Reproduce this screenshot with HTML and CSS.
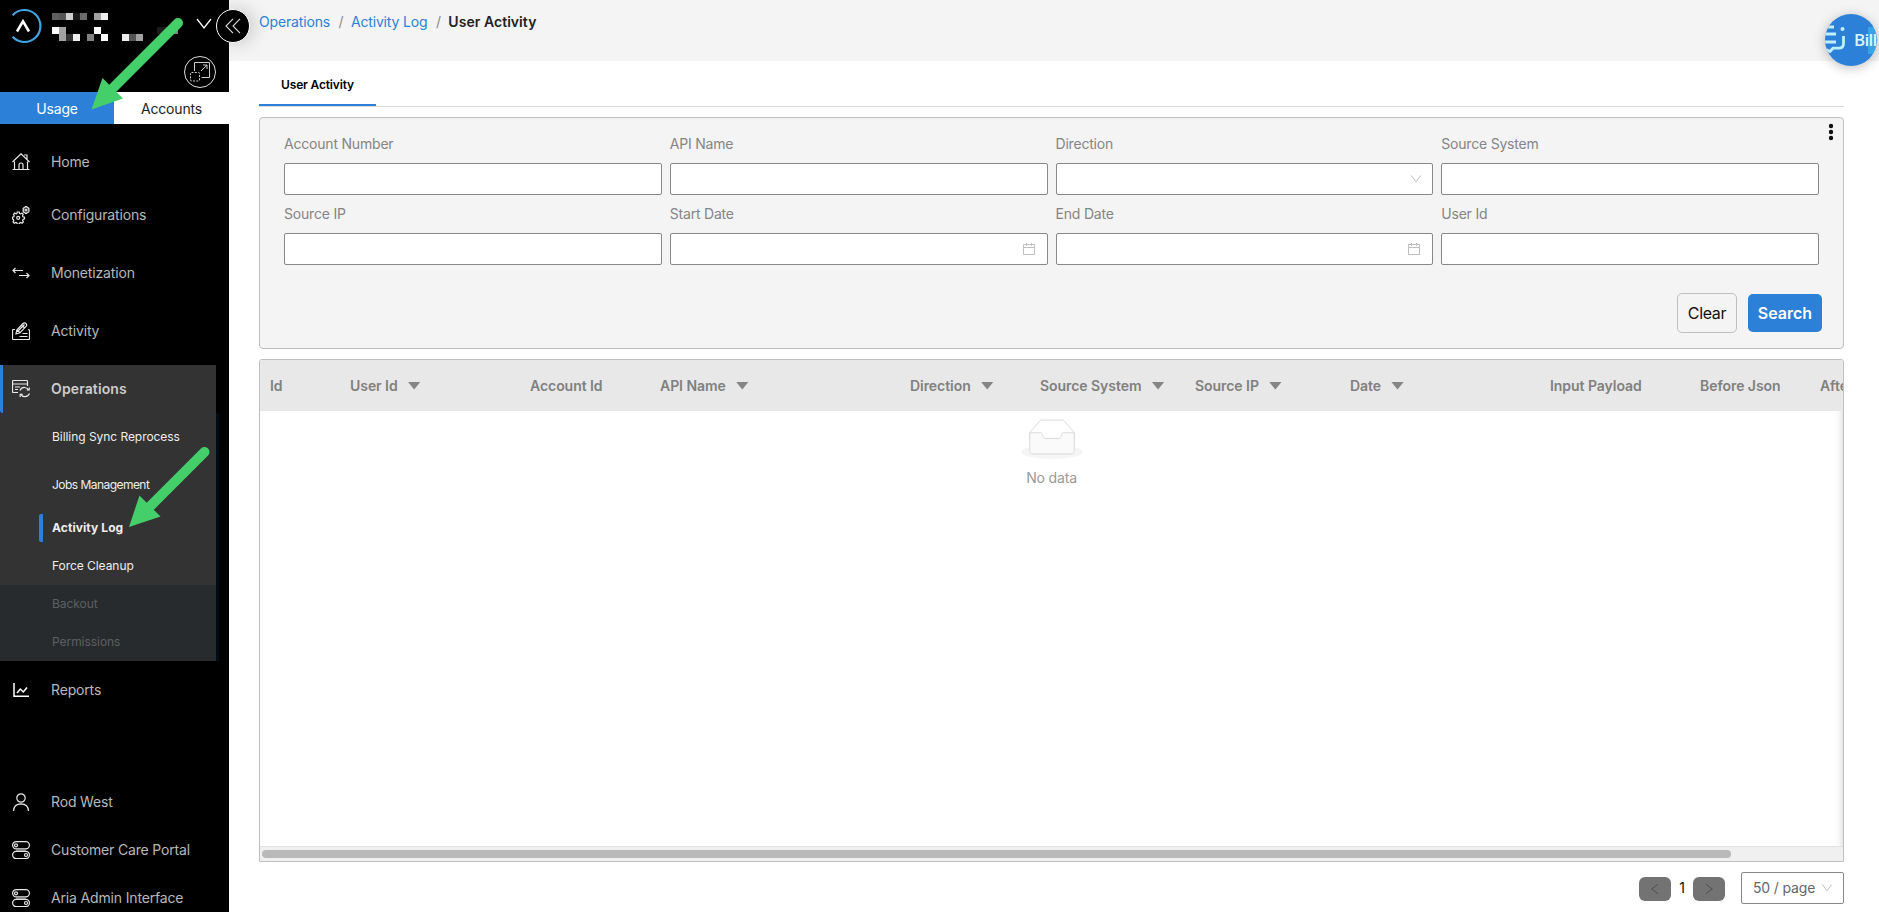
FILE: index.html
```html
<!DOCTYPE html>
<html lang="en">
<head>
<meta charset="utf-8">
<title>User Activity</title>
<link rel="stylesheet" href="styles.css">
</head>
<body>
<div class="app">
  <aside class="sidebar">
    <div class="brand">
      <svg class="brand-art" width="229" height="92" viewBox="0 0 229 92" fill="none">
        <path d="M12.6 15.2A16 16 0 1 1 12.6 36.8" stroke="#3fa6e4" stroke-width="2.2"/>
        <path d="M17 31.5l6-10.2 6 10.2" stroke="#fff" stroke-width="2.5"/>
        <g shape-rendering="crispEdges">
          <path fill="#5f5f5f" d="M52 13h7v7h-7z"/><path fill="#565656" d="M59 13h7v7h-7zM129 34h7v7h-7z"/><path fill="#d0d0d0" d="M66 13h7v7h-7z"/><path fill="#1b1b1b" d="M73 13h7v7h-7zM157 27h14v7h-14z"/><path fill="#6b6b6b" d="M80 13h7v7h-7z"/><path fill="#a2a2a2" d="M94 13h7v7h-7zM59 27h7v14h-7zM136 34h7v7h-7z"/><path fill="#eee" d="M101 13h7v7h-7zM73 34h7v7h-7zM122 34h7v7h-7z"/>
          <path fill="#fff" d="M52 27h7v7h-7zM94 27h7v7h-7zM101 34h7v7h-7z"/><path fill="#333" d="M66 34h7v7h-7z"/><path fill="#808080" d="M87 34h7v7h-7zM171 27h7v7h-7z"/>
        </g>
        <path d="M197 19l7 9 7-9" stroke="#fff" stroke-width="1.3"/>
        <circle cx="200" cy="72" r="15.5" stroke="#ddd"/>
        <path d="M194.500 71V62.500h15v15h-8M201 71l6-6M203 65h4v4" stroke="#ccc"/>
        <rect x="190.500" y="72.500" width="9" height="8.500" rx="1" stroke="#ccc" stroke-dasharray="2 1.300"/>
      </svg>
    </div>
    <div class="switch"><span class="switch-on">Usage</span><span class="switch-off">Accounts</span></div>
    <nav class="menu">
      <a class="item item-home"><svg class="icon" viewBox="0 0 18 18"><path d="M.5 9L9 .8 17.500 9M2.500 8.500v8M15.500 8.500v8M.5 16.500h17M7 16v-4.500q0-1.500 2-1.500t2 1.500V16M12 2h3v4"/></svg>Home</a>
      <a class="item"><svg class="icon" viewBox="0 0 18 18"><circle cx="6.200" cy="11.800" r="1.500"/><path d="M5.200 6h2l.4 1.500 1 .4L10 7.100l1.200 1.200-.7 1.500.4.9 1.600.5v1.700l-1.500.6-.4 1 .8 1.400-1.300 1.300-1.400-.7-1 .4-.5 1.300H5.300l-.5-1.400-1-.4-1.500.8L1 15.900l.8-1.400-.4-1L.5 13v-1.800l1.300-.5.4-1-.7-1.400L2.700 7l1.500.8.7-.3z"/><circle cx="14" cy="4" r="1"/><path d="M13.300.7h1.500l.4 1 1.200.2.7 1.200-.5.9.5 1-.7 1.200-1.200.1-.5 1h-1.400l-.5-1-1.200-.2-.6-1.200.6-.9-.6-1 .7-1.200 1.100-.1z"/></svg>Configurations</a>
      <a class="item"><svg class="icon" viewBox="0 0 18 18"><path d="M11 6.500H1M3.500 4L1 6.500 3.500 9M7 11.500h10M14.500 9l2.500 2.500-2.500 2.500"/></svg>Monetization</a>
      <a class="item"><svg class="icon" viewBox="0 0 18 18"><path d="M3 7.500H1.500q-1 0-1 1v8q0 1 1 1h15q1 0 1-1v-8q0-1-1.500-1M7.500 14.500h8M10.500 11.500h5M4 12l.8-4L11 1.500q1.300-1.300 2.700-.2 1.600 1.300.5 2.900L8 10.800zM5 8l3 2.700M6.500 8.500l6-6M9.500 3l3.200 3"/></svg>Activity</a>
      <section class="group">
        <a class="item item-current"><svg class="icon" viewBox="0 0 18 18"><path d="M6 12.500H1.500q-1 0-1-1v-10q0-1 1-1h13q1 0 1 1V6M.5 4h15M3 7h5M3 9.500h3M8 10.500q1.500-3.500 5-3 2.500.3 3.500 2.500M17.200 7.500V10h-2.500M17.500 13.500q-1.500 3.500-4.800 3.200-2.700-.2-3.900-2.500M8.200 17v-2.700h2.500"/></svg>Operations</a>
        <div class="sub">
          <a class="sub-item tall">Billing Sync Reprocess</a>
          <a class="sub-item tall narrow">Jobs Management</a>
          <a class="sub-item active"><span>Activity Log</span></a>
          <a class="sub-item">Force Cleanup</a>
          <a class="sub-item disabled">Backout</a>
          <a class="sub-item disabled">Permissions</a>
        </div>
      </section>
      <a class="item item-reports"><svg class="icon bold" viewBox="0 0 18 18"><path d="M2 2v13.300h15M5 12l3.300-4 3 3L15 6.500"/></svg>Reports</a>
      <div class="menu-bottom">
        <a class="item"><svg class="icon" viewBox="0 0 18 18"><circle cx="9" cy="5" r="4.200"/><path d="M1.500 18q.3-7 7.500-7.200Q16.200 11 16.500 18"/></svg>Rod West</a>
        <a class="item"><svg class="icon" viewBox="0 0 18 18"><rect x=".6" y=".6" width="16.800" height="7.300" rx="3.600"/><rect x=".6" y="10.300" width="16.800" height="7.300" rx="3.600"/><circle cx="4" cy="4.300" r="1.500"/><circle cx="14" cy="14" r="1.500"/><path d="M4 9.100h10" stroke="#888" stroke-width="2"/></svg>Customer Care Portal</a>
        <a class="item"><svg class="icon" viewBox="0 0 18 18"><rect x=".6" y=".6" width="16.800" height="7.300" rx="3.600"/><rect x=".6" y="10.300" width="16.800" height="7.300" rx="3.600"/><circle cx="4" cy="4.300" r="1.500"/><circle cx="14" cy="14" r="1.500"/><path d="M4 9.100h10" stroke="#888" stroke-width="2"/></svg>Aria Admin Interface</a>
      </div>
    </nav>
  </aside>

  <main class="main">
    <header class="topbar">
      <a class="crumb">Operations</a><span class="sep">/</span><a class="crumb">Activity Log</a><span class="sep">/</span><b class="crumb-now">User Activity</b>
    </header>
    <div class="content">
      <div class="tabs"><div class="tab">User Activity</div></div>
      <form class="filters">
        <div class="fields">
          <div class="field"><label>Account Number</label><div class="box"></div></div>
          <div class="field"><label>API Name</label><div class="box"></div></div>
          <div class="field"><label>Direction</label><div class="box"><svg class="chev" width="12" height="12" viewBox="0 0 12 12"><path d="M1.300 2.500L6 8.800l4.700-6.300"/></svg></div></div>
          <div class="field"><label>Source System</label><div class="box"></div></div>
          <div class="field"><label>Source IP</label><div class="box"></div></div>
          <div class="field"><label>Start Date</label><div class="box"><svg class="cal" width="14" height="14" viewBox="0 0 14 14"><path d="M1.500 2.500h11v10h-11zM1.500 5.500h11M4.500 1v3M9.500 1v3"/></svg></div></div>
          <div class="field"><label>End Date</label><div class="box"><svg class="cal" width="14" height="14" viewBox="0 0 14 14"><path d="M1.500 2.500h11v10h-11zM1.500 5.500h11M4.500 1v3M9.500 1v3"/></svg></div></div>
          <div class="field"><label>User Id</label><div class="box"></div></div>
        </div>
        <div class="actions"><span class="btn clear">Clear</span><span class="btn search">Search</span></div>
        <svg class="more" width="6" height="18" viewBox="0 0 6 18"><circle cx="3" cy="3" r="2.200"/><circle cx="3" cy="9" r="2.200"/><circle cx="3" cy="15" r="2.200"/></svg>
      </form>
      <section class="table">
        <div class="thead">
          <div>Id</div><div>User Id<i class="sort"></i></div><div>Account Id</div><div>API Name<i class="sort"></i></div><div>Direction<i class="sort"></i></div><div>Source System<i class="sort"></i></div><div>Source IP<i class="sort"></i></div><div>Date<i class="sort"></i></div><div>Input Payload</div><div>Before Json</div><div>After Json</div>
        </div>
        <div class="empty">
          <svg width="62" height="40" viewBox="0 0 64 41"><g transform="translate(0 1)"><ellipse fill="#f5f5f5" cx="32" cy="33" rx="32" ry="7"/><g stroke="#d9d9d9"><path fill="#fff" d="M55 12.760L44.854 1.258C44.367.474 43.656 0 42.907 0H21.093c-.749 0-1.460.474-1.947 1.257L9 12.761V22h46v-9.240z"/><path fill="#fafafa" d="M41.613 15.931c0-1.605.994-2.930 2.227-2.931H55v18.137C55 33.260 53.680 35 52.050 35h-40.100C10.320 35 9 33.259 9 31.137V13h11.160c1.233 0 2.227 1.323 2.227 2.928v.022c0 1.605 1.005 2.901 2.237 2.901h14.752c1.232 0 2.237-1.308 2.237-2.913v-.007z"/></g></g></svg>
          <p>No data</p>
        </div>
        <div class="scroll"><div class="thumb"></div></div>
      </section>
      <footer class="pager">
        <span class="pg"><svg width="12" height="12" viewBox="0 0 12 12"><path d="M9 1.300L2.700 6 9 10.700"/></svg></span>
        <span class="pg-num">1</span>
        <span class="pg"><svg width="12" height="12" viewBox="0 0 12 12"><path d="M3 1.300L9.300 6 3 10.700"/></svg></span>
        <span class="size">50 / page<svg class="chev" width="12" height="12" viewBox="0 0 12 12"><path d="M1.300 2.500L6 8.800l4.700-6.300"/></svg></span>
      </footer>
    </div>
  </main>

  <div class="collapse"><svg width="16" height="16" viewBox="0 0 16 16"><path d="M8 .8L1 8l7 7.200M15 .8L8 8l7 7.200"/></svg></div>
  <div class="chat">
    <svg width="20" height="30" viewBox="0 0 20 30"><path d="M3 2h6M0 9h11M0 17h11M0 24l5 2.500 3-3.300h6q4.500 0 4.500-5V11"/><circle cx="17.500" cy="4" r="2" class="chat-dot"/></svg>
    <span>Bill</span>
  </div>
  <svg class="pointers" width="229" height="560" viewBox="0 0 229 560">
    <path class="shaft" d="M178 23L108 93M204.500 452L146 510.500"/>
    <path class="head" d="M91.500 109.500L102.500 78 123 98.500zM129 527l10.500-31.500 21 21z"/>
  </svg>
</div>
</body>
</html>
```
FILE: styles.css
```css
* { box-sizing: border-box; }
body { margin: 0; font: 14px/20px Inter, "Liberation Sans", sans-serif; letter-spacing: -.16px; background: #fff; }
.app { position: relative; display: flex; width: 1879px; height: 912px; overflow: hidden; }

/* Sidebar */
.sidebar { width: 229px; flex: none; background: #000; display: flex; flex-direction: column; }
.brand { height: 92px; }
.brand-art { display: block; }
.switch { display: flex; height: 32px; line-height: 34px; text-align: center; }
.switch-on { width: 114px; background: #2c80d8; color: #fff; }
.switch-off { flex: 1; background: #fff; color: #222; }
.menu { display: flex; flex-direction: column; padding-top: 14px; }
.item { display: flex; align-items: center; height: 48px; margin-bottom: 10px; padding-left: 12px; gap: 21px; color: #b8b8b8; flex: none; }
.item-home { margin-bottom: 5px; }
.icon { width: 18px; height: 18px; flex: none; fill: none; stroke: #e8e8e8; stroke-width: 1.200; }
.icon.bold { stroke: #fff; stroke-width: 1.500; }
.group { width: 219px; background: #000c17; }
.item-current { width: 216px; margin: 0; padding-left: 9px; border-left: 3px solid #2c80d8; border-radius: 0 0 0 2px; background: #333; color: #ccc; font-weight: 600; letter-spacing: .12px; box-shadow: 3px 0 #000; }
.sub { width: 216px; background: #333; font-size: 12px; letter-spacing: -.05px; }
.sub-item { display: flex; align-items: center; height: 38px; padding-left: 52px; color: #eee; }
.sub-item.tall { height: 48px; }
.sub-item.narrow { letter-spacing: -.54px; }
.sub-item.active { padding-left: 39px; font-weight: 700; letter-spacing: .08px; }
.active span { border-left: 4px solid #2c80d8; border-radius: 2px; padding-left: 9px; line-height: 28px; }
.sub-item.disabled { background: #282b2e; color: #5d5f61; }
.item-reports { margin: 5px 0 0; }
.menu-bottom { padding-top: 64px; }
.menu-bottom .item { margin: 0; }

/* Header */
.main { flex: 1; min-width: 0; }
.topbar { height: 61px; background: #f4f4f4; padding: 12px 30px; display: flex; color: #888; }
.crumb { color: #2c80d8; }
.sep { margin: 0 7.500px 0 8.500px; }
.crumb-now { font-weight: 600; color: #222; letter-spacing: .05px; }
.content { margin: 0 35px 0 30px; }
.tabs { height: 46px; border-bottom: 1px solid #d9d9d9; font-size: 12px; font-weight: 600; color: #000; }
.tab { width: 117px; height: 45px; border-bottom: 2px solid #2c80d8; padding-top: 14px; text-align: center; }

/* Filter form */
.filters { position: relative; height: 232px; margin-top: 10px; padding: 16px 24px; border: 1px solid #bfbfbf; border-radius: 4px; background: #f4f4f4; }
.fields { display: grid; grid-template-columns: repeat(4, 1fr); column-gap: 8px; row-gap: 8px; }
.field label { display: block; height: 29px; color: #858585; line-height: 19px; letter-spacing: -.2px; }
.box { height: 32px; display: flex; align-items: center; justify-content: flex-end; padding-right: 11px; border: 1px solid #888; border-radius: 2px; background: #fff; }
.field { height: 62px; }
.chev, .cal { fill: none; stroke: #bfbfbf; stroke-width: 1; }
.box .chev { margin-right: -1px; }
.actions { display: flex; justify-content: flex-end; align-items: center; gap: 11px; margin: 27px -3px 0 0; }
.btn { display: flex; align-items: center; justify-content: center; border-radius: 5px; font-size: 16px; }
.clear { width: 60px; height: 40px; border: 1px solid #bfbfbf; color: #111; letter-spacing: -.35px; }
.search { width: 74px; height: 38px; background: #2c80d8; color: #fff; font-weight: 600; letter-spacing: 0; }
.more { position: absolute; right: 9px; top: 5px; fill: #111; }

/* Results table */
.table { height: 503px; margin-top: 10px; border: 1px solid #bfbfbf; border-radius: 3px 3px 0 0; overflow: hidden; display: flex; flex-direction: column; box-shadow: inset -8px 0 8px -8px #ccc; }
.thead { display: grid; grid-template-columns: 80px 180px 130px 250px 130px 155px 155px 200px 150px 120px 120px; height: 51px; flex: none; align-items: center; background: #e8e8e8; color: #808080; font-weight: 600; letter-spacing: -.05px; }
.thead div { display: flex; align-items: center; padding-left: 10px; white-space: nowrap; }
.sort { width: 13px; height: 8px; margin-left: 10px; background: #858585; clip-path: polygon(0 0, 100% 0, 50% 100%); }
.empty { flex: 1; padding-top: 8px; text-align: center; color: #999; }
.empty svg { display: block; margin: 0 auto; }
.empty p { margin: 9px 0 0; }
.scroll { height: 15px; background: #f0f0f0; border-top: 1px solid #e2e2e2; padding: 3px 2px; }
.thumb { width: 1469px; height: 8px; border-radius: 4px; background: #b9b9b9; }

/* Pagination */
.pager { display: flex; justify-content: flex-end; align-items: center; height: 32px; margin-top: 10px; }
.pg { width: 32px; height: 24px; margin-top: 2px; border-radius: 6px; background: #737373; display: flex; align-items: center; justify-content: center; }
.pg svg { fill: none; stroke: #4f4f4f; }
.pg-num { width: 22px; text-align: center; color: #111; }
.size { display: flex; align-items: center; justify-content: space-between; width: 103px; height: 32px; margin-left: 16px; padding: 0 10px 0 11px; border: 1px solid #888; border-radius: 2px; color: #666; }

/* Floating controls */
.collapse { position: absolute; left: 216px; top: 9px; width: 34px; height: 34px; border: 1px solid #fff; border-radius: 50%; background: #000; display: flex; align-items: center; justify-content: center; box-shadow: 4px 0 18px rgba(0,0,0,.18); }
.collapse svg { fill: none; stroke: #ddd; stroke-width: 1.100; }
.chat { position: absolute; left: 1825px; top: 14px; width: 52px; height: 52px; border-radius: 50%; overflow: hidden; background: linear-gradient(90deg, transparent 43px, #36a3e4 43px) no-repeat 0 13px / 52px 27px, #2c80d8; display: flex; align-items: center; color: #d8f5fa; font: 600 17px/20px "Open Sans", sans-serif; letter-spacing: -.7px; box-shadow: 0 2px 12px rgba(0,0,0,.25); }
.chat svg { flex: none; fill: none; stroke: #bff0fa; stroke-width: 2.800; }
.chat .chat-dot { fill: #bff0fa; stroke: none; }
.chat span { margin-left: 9px; }
.pointers { position: absolute; left: 0; top: 0; pointer-events: none; }
.shaft { stroke: #45cf6b; stroke-width: 10; stroke-linecap: round; }
.head { fill: #45cf6b; }
```
